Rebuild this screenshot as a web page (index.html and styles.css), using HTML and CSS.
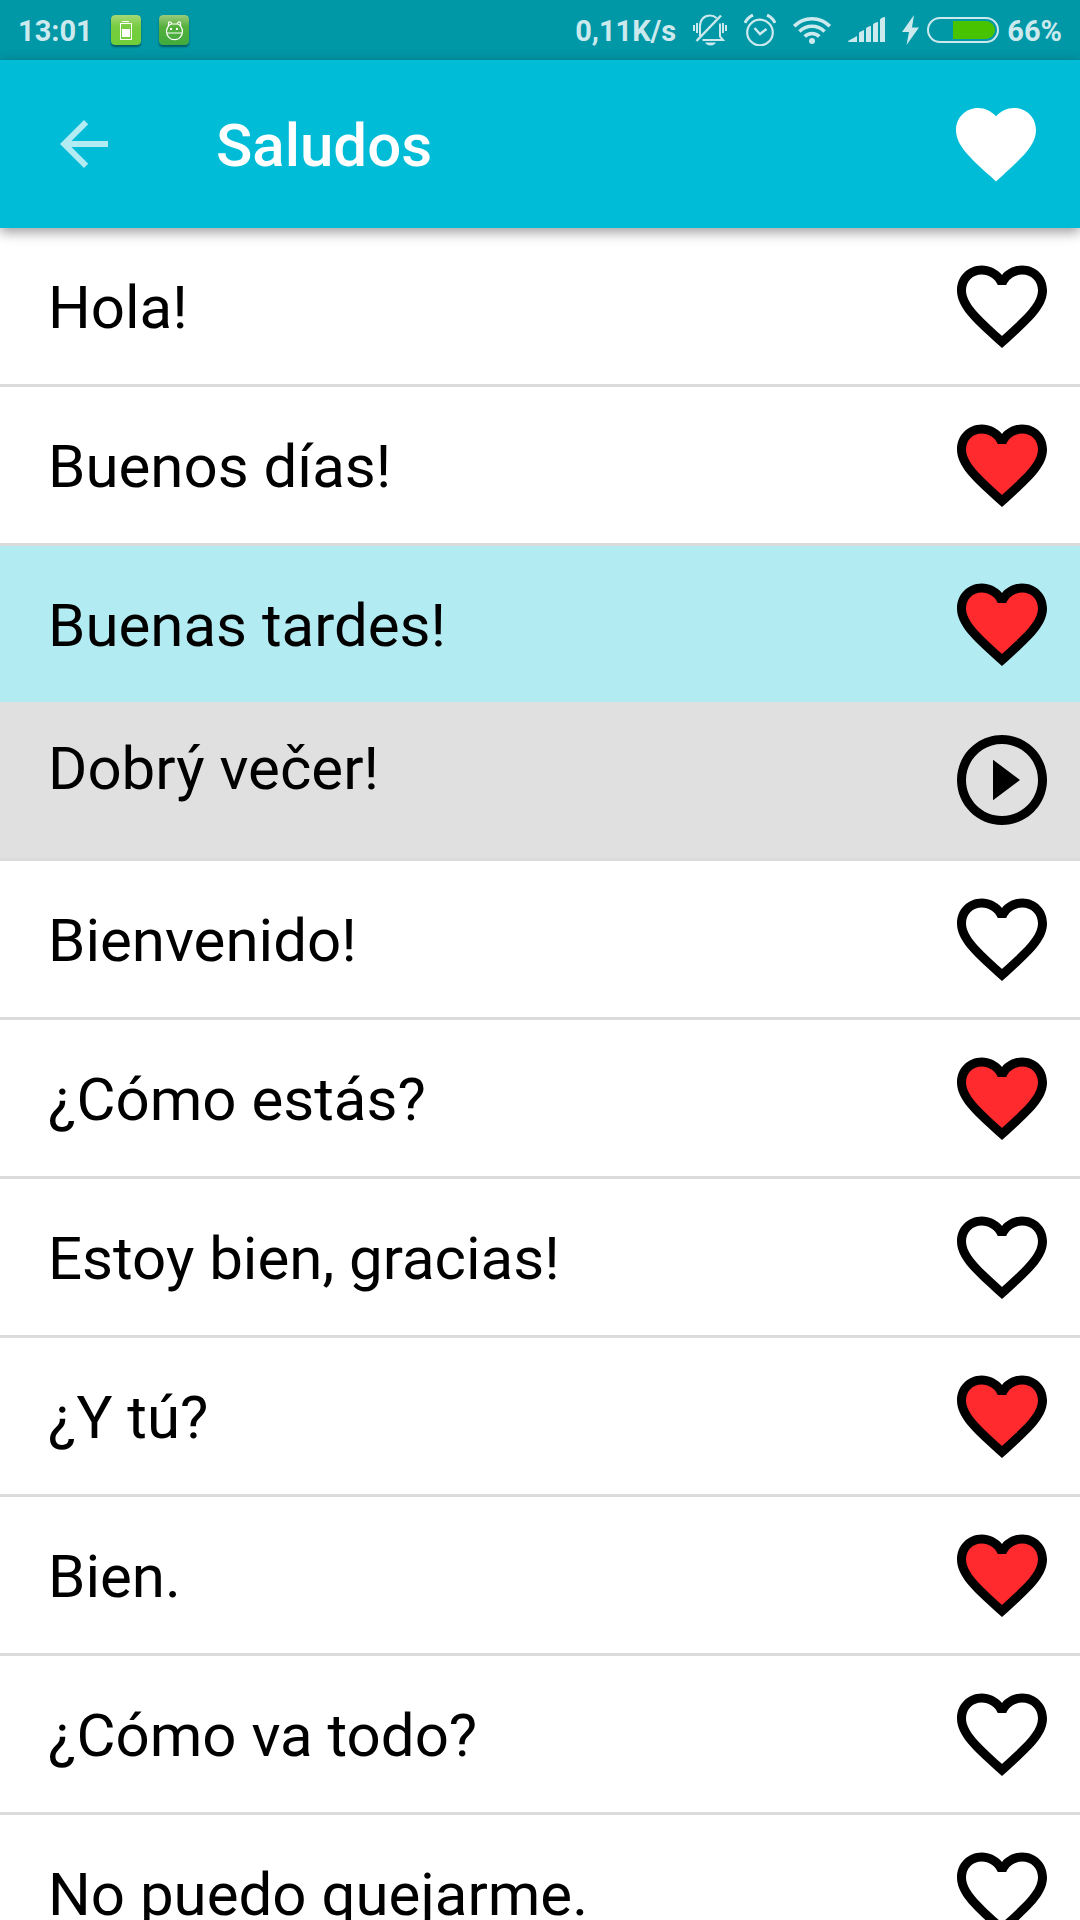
FILE: index.html
```html
<!DOCTYPE html>
<html lang="es">
<head>
    <meta charset="UTF-8">
    <meta name="viewport" content="width=device-width, initial-scale=1.0">
    <title>Saludos</title>
    <link rel="stylesheet" href="styles.css">
</head>
<body>
    <!-- shared icons -->
    <svg class="sprite" aria-hidden="true">
        <symbol id="heart" viewBox="0 0 24 24">
            <path class="heart-fill" d="M12 20.2C6.5 15.2 3 12 3 8.5 3 6 5 4 7.500 4c1.800 0 3.400 1 4.500 2.800C13.100 5 14.700 4 16.500 4 19 4 21 6 21 8.500c0 3.500-3.500 6.700-9 11.700z"/>
            <path d="M16.500 3c-1.740 0-3.410.81-4.500 2.090C10.910 3.810 9.240 3 7.500 3 4.420 3 2 5.420 2 8.500c0 3.780 3.400 6.860 8.550 11.540L12 21.350l1.450-1.320C18.600 15.360 22 12.280 22 8.500 22 5.420 19.580 3 16.500 3zm-4.400 15.550l-.1.1-.1-.1C7.140 14.240 4 11.390 4 8.500 4 6.500 5.500 5 7.500 5c1.540 0 3.040.99 3.570 2.360h1.870C13.460 5.990 14.960 5 16.500 5c2 0 3.500 1.500 3.500 3.500 0 2.890-3.140 5.740-7.900 10.050z"/>
        </symbol>
    </svg>

    <!-- status bar -->
    <div class="status-bar">
        <span>13:01</span>
        <svg class="app-icon" width="30" height="30" viewBox="0 0 30 30">
            <defs>
                <linearGradient id="lime" x1="0" y1="0" x2="0" y2="1">
                    <stop offset="0" stop-color="#a5d977"/>
                    <stop offset=".4" stop-color="#76cc40"/>
                    <stop offset="1" stop-color="#70cf38"/>
                </linearGradient>
            </defs>
            <rect width="30" height="30" rx="4" fill="url(#lime)"/>
            <path d="M11 6.500h7" stroke="#fff"/>
            <rect x="9.500" y="8.500" width="11" height="16" fill="none" stroke="#fff"/>
            <rect x="11" y="14" width="8" height="8" fill="#fff"/>
        </svg>
        <svg class="app-icon" width="30" height="30" viewBox="0 0 30 30">
            <defs>
                <linearGradient id="green" x1="0" y1="0" x2="0" y2="1">
                    <stop offset="0" stop-color="#9aca7c"/>
                    <stop offset=".4" stop-color="#55b03c"/>
                    <stop offset="1" stop-color="#40ab3e"/>
                </linearGradient>
            </defs>
            <rect width="30" height="30" rx="4" fill="url(#green)"/>
            <path d="M9.500 11V8q0-1.200 1.200-1.200t1.800 1.200v1M21.500 11V8q0-1.200-1.200-1.200t-1.800 1.200v1M12.500 9h6c2.500.5 5 4 5 7.500a8 8.200 0 0 1-16 0c0-3.500 2.500-7 5-7.500M7.500 18h16" fill="none" stroke="#fff" stroke-width="1.200"/>
            <path d="M11 13h2v2h-2zM17 13h2v2h-2z" fill="#fff"/>
        </svg>

        <div class="status-right">
            <span>0,11K/s</span>
            <svg width="34" height="32" viewBox="0 0 34 32" fill="none" stroke="currentColor" stroke-width="2">
                <path d="M1 11v6M4 9v10M30 9v10M33 11v6"/>
                <path d="M7 22V12c0-6 4-10.500 10-10.500 3 0 5 1 6.500 2.500M27 9.500v13l3 3.500H9.500"/>
                <path d="M3.500 27L28 1.500" stroke-width="2.500"/>
                <path d="M12 28.500h11c-1 2-3 3-5.500 3s-4.500-1-5.500-3z" fill="currentColor" stroke="none"/>
            </svg>
            <svg width="32" height="32" viewBox="0 0 32 32" fill="none" stroke="currentColor">
                <circle cx="16" cy="18.500" r="12.800" stroke-width="2.200"/>
                <path d="M10.500 14l5.500 6 6.500-5" stroke-width="2.500"/>
                <path d="M1 9c1.500-3.500 4.500-6.500 8-8M23 1c3.500 1.500 6.500 4.500 8 8" stroke-width="3"/>
            </svg>
            <svg width="38" height="28" viewBox="0 0 38 28" fill="none" stroke="currentColor" stroke-width="3.600">
                <path d="M1.200 10.200a25 25 0 0 1 35.600 0M6.500 15.400a17.700 17.700 0 0 1 25 0M11.700 20.600a10.300 10.300 0 0 1 14.600 0"/>
                <circle cx="19" cy="25" r="3" fill="currentColor" stroke="none"/>
            </svg>
            <svg width="37" height="26" viewBox="0 0 37 26" fill="currentColor">
                <path d="M0 24l9-5v6H1q-1 0-1-1zM11 16q0-1 5-3v12h-5zM18 12q0-2 5-3v16h-5zM25 8q0-2 5-3v20h-5zM32 3q0-2 5-3v25h-5z"/>
            </svg>
            <div class="battery">
                <svg width="17" height="30" viewBox="0 0 17 30" fill="currentColor">
                    <path d="M12 0L0 17h7L4.500 30 17 12.500h-7z"/>
                </svg>
                <svg width="72" height="26" viewBox="0 0 72 26">
                    <rect x="1" y="1" width="70" height="24" rx="12" fill="none" stroke="currentColor" stroke-width="2"/>
                    <path d="M26 4h33a9 9 0 0 1 0 18H26z" fill="#47c300"/>
                </svg>
                <span>66%</span>
            </div>
        </div>
    </div>

    <!-- app bar -->
    <header class="app-bar">
        <button class="icon-button back" aria-label="Atrás">
            <svg width="72" height="72" viewBox="0 0 24 24"><path d="M20 11H7.830l5.590-5.590L12 4l-8 8 8 8 1.410-1.410L7.830 13H20v-2z"/></svg>
        </button>
        <h1>Saludos</h1>
        <button class="icon-button" aria-label="Favoritos">
            <svg width="96" height="96" viewBox="0 0 24 24"><path d="M12 21.350l-1.450-1.320C5.400 15.360 2 12.280 2 8.500 2 5.420 4.420 3 7.500 3c1.740 0 3.410.81 4.500 2.090C13.090 3.810 14.760 3 16.500 3 19.580 3 22 5.420 22 8.500c0 3.780-3.400 6.860-8.550 11.540L12 21.350z"/></svg>
        </button>
    </header>

    <!-- phrases -->
    <ul class="phrases">
        <li>
            <div class="phrase">
                <span>Hola!</span>
                <button class="icon-button" aria-label="Favorito"><svg class="icon"><use href="#heart"/></svg></button>
            </div>
        </li>
        <li>
            <div class="phrase">
                <span>Buenos días!</span>
                <button class="icon-button liked" aria-label="Favorito"><svg class="icon"><use href="#heart"/></svg></button>
            </div>
        </li>
        <li>
            <div class="phrase selected">
                <span>Buenas tardes!</span>
                <button class="icon-button liked" aria-label="Favorito"><svg class="icon"><use href="#heart"/></svg></button>
            </div>
            <div class="phrase translation">
                <span lang="cs">Dobrý večer!</span>
                <button class="icon-button" aria-label="Reproducir">
                    <svg class="icon" viewBox="0 0 24 24"><path d="M10 16.500l6-4.500-6-4.500v9zM12 2C6.480 2 2 6.480 2 12s4.480 10 10 10 10-4.480 10-10S17.520 2 12 2zm0 18c-4.410 0-8-3.590-8-8s3.590-8 8-8 8 3.590 8 8-3.590 8-8 8z"/></svg>
                </button>
            </div>
        </li>
        <li>
            <div class="phrase">
                <span>Bienvenido!</span>
                <button class="icon-button" aria-label="Favorito"><svg class="icon"><use href="#heart"/></svg></button>
            </div>
        </li>
        <li>
            <div class="phrase">
                <span>¿Cómo estás?</span>
                <button class="icon-button liked" aria-label="Favorito"><svg class="icon"><use href="#heart"/></svg></button>
            </div>
        </li>
        <li>
            <div class="phrase">
                <span>Estoy bien, gracias!</span>
                <button class="icon-button" aria-label="Favorito"><svg class="icon"><use href="#heart"/></svg></button>
            </div>
        </li>
        <li>
            <div class="phrase">
                <span>¿Y tú?</span>
                <button class="icon-button liked" aria-label="Favorito"><svg class="icon"><use href="#heart"/></svg></button>
            </div>
        </li>
        <li>
            <div class="phrase">
                <span>Bien.</span>
                <button class="icon-button liked" aria-label="Favorito"><svg class="icon"><use href="#heart"/></svg></button>
            </div>
        </li>
        <li>
            <div class="phrase">
                <span>¿Cómo va todo?</span>
                <button class="icon-button" aria-label="Favorito"><svg class="icon"><use href="#heart"/></svg></button>
            </div>
        </li>
        <li>
            <div class="phrase">
                <span>No puedo quejarme.</span>
                <button class="icon-button" aria-label="Favorito"><svg class="icon"><use href="#heart"/></svg></button>
            </div>
        </li>
    </ul>
</body>
</html>
```

FILE: styles.css
```css
* {
    box-sizing: border-box;
}

body {
    margin: 0;
    height: 100vh;
    display: flex;
    flex-direction: column;
    overflow: hidden;
    font-family: Roboto, sans-serif;
    background-color: #fff;
    color: #000;
}

svg {
    display: block;
    flex: none;
}

.sprite {
    display: none;
}

/* status bar */
.status-bar {
    display: flex;
    align-items: center;
    gap: 18px;
    height: 60px;
    padding: 0 18px;
    flex: none;
    background-color: #0097a7;
    color: #cceaed;
    font-size: 29px;
    font-weight: 700;
    line-height: 36px;
}

.status-bar span {
    padding-top: 2px;
}

.app-icon {
    border-radius: 4px;
    box-shadow: 0 2px 2px rgba(0, 0, 0, 0.4);
}

.status-right {
    display: flex;
    align-items: center;
    gap: 17px;
    margin-left: auto;
}

.battery {
    display: flex;
    align-items: center;
    gap: 8px;
}

/* app bar */
.app-bar {
    position: relative;
    z-index: 1;
    display: flex;
    align-items: center;
    height: 168px;
    padding: 0 36px 0 48px;
    flex: none;
    background-color: #00bcd7;
    color: #fff;
    box-shadow: 0 4px 12px rgba(0, 0, 0, 0.4);
}

.app-bar h1 {
    flex: 1;
    margin: 0;
    padding: 4px 0 0 96px;
    font-size: 60px;
    font-weight: 500;
    line-height: 70px;
}

.icon-button {
    flex: none;
    padding: 0;
    border: 0;
    background: none;
    color: inherit;
    cursor: pointer;
}

.icon-button svg {
    fill: currentColor;
}

.back {
    opacity: 0.7;
}

/* phrases */
.phrases {
    flex: 1;
    min-height: 0;
    margin: 0;
    padding: 0;
    list-style: none;
    overflow-y: auto;
    scrollbar-width: none;
}

.phrases li {
    border-bottom: 3px solid #dbdbdb;
}

.phrase {
    display: flex;
    align-items: flex-start;
    justify-content: space-between;
    padding: 24px 24px 24px 48px;
    font-size: 60px;
    line-height: 70px;
}

.phrase span {
    padding-top: 21px;
}

.selected {
    background-color: #b2ebf2;
}

.translation {
    background-color: #e0e0e0;
}

.translation span {
    padding-top: 8px;
}

.icon {
    width: 108px;
    height: 108px;
}

.heart-fill {
    fill: var(--heart, none);
}

.liked {
    --heart: #ff2a2d;
}
```
